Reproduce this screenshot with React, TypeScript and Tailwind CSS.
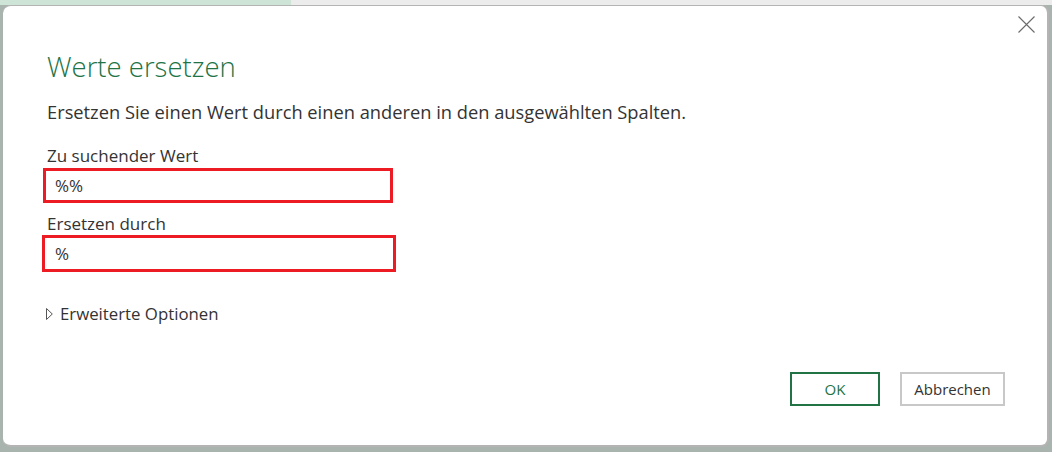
export default function App() {
	return (
		<div className="flex h-[452px] w-[1052px] flex-col overflow-hidden bg-[#a9b4ae] font-['Open_Sans',sans-serif]">
			<div className="flex h-[5px] shrink-0">
				<div className="w-[291px] bg-[#cde4d6]" />
				<div className="flex-1 bg-[#ececec]" />
			</div>
			<div className="flex flex-1 pl-[3px] pr-[3px] pb-[5px]">
				<div className="flex flex-1 flex-col rounded-lg border-r-2 border-b-2 border-t border-[#b4b4b4] bg-white">
					<div className="flex h-[27px] justify-end pt-[10px] pr-[12px]">
						<svg width="17" height="17" viewBox="0 0 17 17" className="text-[#6b6b6b]">
							<path d="M0.5 0.5 L16.5 16.5 M16.5 0.5 L0.5 16.5" stroke="currentColor" strokeWidth="1.1" />
						</svg>
					</div>
					<div className="flex flex-1 flex-col pl-[44px] pr-[40px]">
						<h1 className="mt-[16px] text-[27.5px] leading-[36px] font-light text-[#217346]">Werte ersetzen</h1>
						<p className="mt-[14px] text-[18.3px] leading-[26px] text-[#333333]">
							Ersetzen Sie einen Wert durch einen anderen in den ausgewählten Spalten.
						</p>

						<label className="mt-[20px] text-[17px] leading-[22px] text-[#333333]">Zu suchender Wert</label>
						<div className="mt-[1px] -ml-[4px] flex h-[35px] w-[350px] items-center border-[3px] border-[#ed1c24] pl-[9px] text-[17px] text-[#333333]">
							%%
						</div>

						<label className="mt-[10px] text-[17px] leading-[22px] text-[#333333]">Ersetzen durch</label>
						<div className="-ml-[5px] flex h-[37px] w-[354px] items-center border-[3px] border-[#ed1c24] pl-[10px] text-[17px] text-[#333333]">
							%
						</div>

						<div className="mt-[31px] -ml-[1px] flex items-center gap-[7px] text-[16.8px] leading-[22px] text-[#333333]">
							<svg width="7" height="12" viewBox="0 0 7 12" className="text-[#555]">
								<path d="M0.5 0.5 L6.3 6 L0.5 11.5 Z" fill="none" stroke="currentColor" strokeWidth="1" />
							</svg>
							<span>Erweiterte Optionen</span>
						</div>

						<div className="mt-auto mb-[39px] flex justify-end gap-[20px] pr-[2px]">
							<button className="h-[34px] w-[90px] border-2 border-[#217346] text-[15px] text-[#217346]">OK</button>
							<button className="h-[34px] w-[105px] border-2 border-[#c8c8c8] text-[15px] text-[#333333]">
								Abbrechen
							</button>
						</div>
					</div>
				</div>
			</div>
		</div>
	);
}
